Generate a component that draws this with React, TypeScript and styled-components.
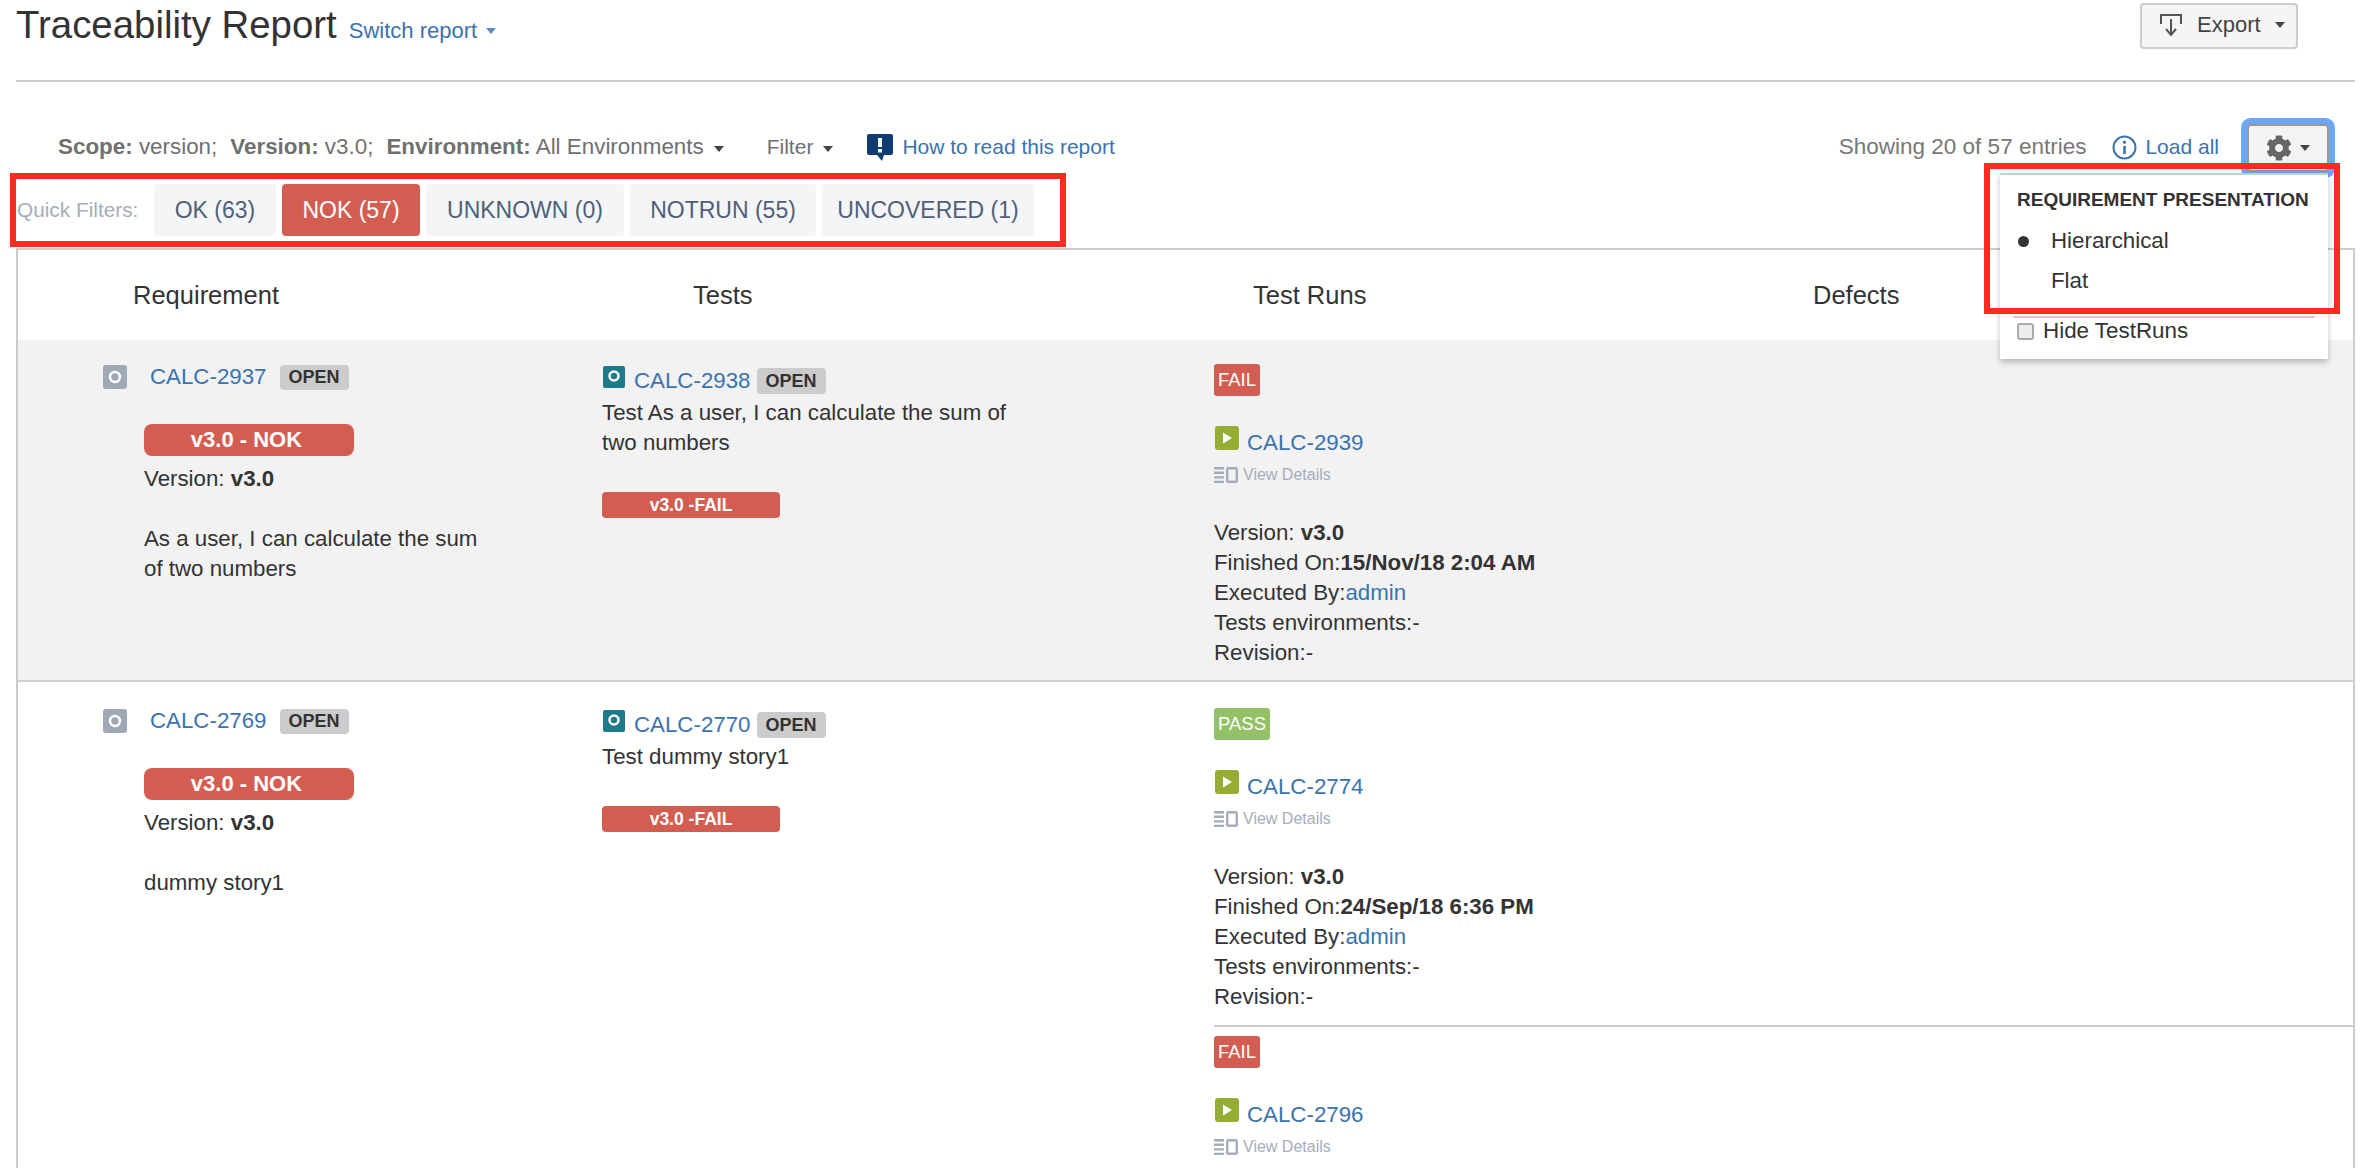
import { createGlobalStyle, styled } from "styled-components";
import { FaCog } from "react-icons/fa";

const GlobalStyle = createGlobalStyle`
  html, body {
    margin: 0;
    padding: 0;
    background: #fff;
  }
  body {
    font-family: "Liberation Sans", Arial, sans-serif;
    color: #333;
  }
`;

const Page = styled.div`
  position: relative;
  box-sizing: border-box;
  width: 2368px;
  height: 1168px;
  padding: 0 13px 0 16px;
  overflow: hidden;
`;

const Header = styled.header`
  display: flex;
  justify-content: space-between;
  align-items: flex-start;
  box-sizing: border-box;
  height: 82px;
  padding: 2px 57px 0 0;
  border-bottom: 2px solid #ccc;
`;

const TitleGroup = styled.div`
  display: flex;
  align-items: baseline;
  gap: 12px;
`;

const Title = styled.h1`
  margin: 0;
  font-size: 38.4px;
  line-height: 46px;
  font-weight: 400;
  color: #333;
`;

const Link = styled.a`
  color: #3b73af;
  text-decoration: none;
`;

const SwitchLink = styled(Link)`
  display: inline-flex;
  align-items: center;
  gap: 9px;
  font-size: 22px;
`;

const Caret = styled.span<{ $color?: string }>`
  display: inline-block;
  width: 0;
  height: 0;
  border-left: 5.5px solid transparent;
  border-right: 5.5px solid transparent;
  border-top: 6px solid ${(p) => p.$color ?? "#444"};
`;

const ExportButton = styled.button`
  display: flex;
  align-items: center;
  box-sizing: border-box;
  width: 158px;
  height: 46px;
  margin-top: 1px;
  padding: 0 0 3px 17px;
  gap: 14px;
  font: inherit;
  font-size: 22px;
  color: #444;
  background: #f5f5f5;
  border: 2px solid #ccc;
  border-radius: 4px;
`;

const Toolbar = styled.div`
  display: flex;
  justify-content: space-between;
  align-items: center;
  height: 34px;
  margin: 48px 26px 20px 0;
  padding-left: 42px;
  font-size: 21px;
  color: #707070;
`;

const ScopeGroup = styled.div`
  display: flex;
  align-items: center;
`;

const ScopeItem = styled.span`
  margin-right: 13px;
  font-size: 22.4px;
  white-space: pre;
`;

const ScopeFilter = styled(ScopeItem)`
  font-size: 21px;
`;

const ScopeCaret = styled.span`
  display: inline-flex;
  margin: 4px 43px 0 -3px;
`;

const HelpLink = styled(Link)`
  display: inline-flex;
  align-items: center;
  gap: 8px;
  margin-left: -10px;
`;

const ResultGroup = styled.div`
  display: flex;
  align-items: center;
`;

const Showing = styled.span`
  font-size: 22.5px;
  color: #777;
  margin-right: 26px;
`;

const LoadAll = styled(Link)`
  display: inline-flex;
  align-items: center;
  gap: 8px;
  margin-right: 28px;
`;

const GearWrap = styled.div`
  position: relative;
  margin-top: 2px;
`;

const GearButton = styled.button`
  display: flex;
  align-items: center;
  justify-content: center;
  gap: 8px;
  box-sizing: border-box;
  width: 82px;
  height: 48px;
  padding: 0;
  background: #f3f3f3;
  border: 2px solid #999;
  border-radius: 4px;
  box-shadow: 0 0 0 6px #6ea6f7;
  color: #666;
`;

const Menu = styled.div`
  position: absolute;
  top: 49px;
  right: 1px;
  z-index: 2;
  box-sizing: border-box;
  width: 328px;
  height: 186px;
  padding-top: 13px;
  background: #fff;
  border-top: 2px solid #ccc;
  box-shadow: 0 3px 6px rgba(0, 0, 0, 0.25);
  color: #333;
`;

const MenuTitle = styled.div`
  margin-left: 17px;
  font-size: 19px;
  line-height: 24px;
  font-weight: 700;
  white-space: nowrap;
`;

const MenuList = styled.div`
  margin-top: 9px;
`;

const MenuItem = styled.div`
  display: flex;
  align-items: center;
  height: 40px;
  padding-left: 18px;
  font-size: 22.3px;
`;

const Dot = styled.span<{ $on: boolean }>`
  width: 11px;
  height: 11px;
  margin-right: 22px;
  border-radius: 50%;
  background: #333;
  visibility: ${(p) => (p.$on ? "visible" : "hidden")};
`;

const MenuDivider = styled.hr`
  width: 302px;
  margin: 15px 0 0 13px;
  border: 0;
  border-top: 2px solid #ccc;
`;

const HideRow = styled.label`
  display: flex;
  align-items: center;
  gap: 9px;
  height: 26px;
  padding-left: 17px;
  font-size: 22.4px;
`;

const CheckBox = styled.input`
  appearance: none;
  flex: none;
  width: 17px;
  height: 17px;
  margin: 0;
  background: #eee;
  border: 2px solid #aaa;
  border-radius: 3px;
`;

const FilterRow = styled.div`
  display: flex;
  align-items: center;
  gap: 6px;
  height: 52px;
  margin-bottom: 12px;
`;

const FilterLabel = styled.span`
  width: 131px;
  margin-left: 1px;
  font-size: 20.8px;
  color: #a5adba;
  white-space: nowrap;
`;

const FilterButton = styled.button<{ $active?: boolean; $width: number }>`
  width: ${(p) => p.$width}px;
  height: 52px;
  padding: 0;
  font: inherit;
  font-size: 23px;
  color: ${(p) => (p.$active ? "#fff" : "#505f79")};
  background: ${(p) => (p.$active ? "#d45d52" : "#f4f5f7")};
  border: 0;
  border-radius: 4px;
  white-space: nowrap;
`;

const Table = styled.section`
  border: solid #ccc;
  border-width: 2px 2px 0;
`;

const HeadRow = styled.div`
  display: grid;
  grid-template-columns: 560px 560px 560px 1fr;
  align-items: center;
  height: 90px;
  padding-left: 115px;
  font-size: 25.5px;
`;

const Row = styled.div<{ $odd?: boolean }>`
  display: grid;
  grid-template-columns: 584px 612px 1fr;
  padding: ${(p) => (p.$odd ? "24px" : "26px")} 0 12px;
  background: ${(p) => (p.$odd ? "#f2f2f2" : "#fff")};
  border-bottom: 2px solid #d0d0d0;
`;

const ReqCell = styled.div`
  padding-left: 85px;
  font-size: 22.3px;
  line-height: 30px;
`;

const ReqHead = styled.div`
  display: flex;
  align-items: center;
  height: 26px;
`;

const IssueId = styled(Link)`
  font-size: 22.3px;
  line-height: 26px;
  white-space: nowrap;
`;

const ReqId = styled(IssueId)`
  margin-left: 23px;
`;

const Lozenge = styled.span<{ $tall?: boolean }>`
  display: inline-flex;
  align-items: center;
  justify-content: center;
  box-sizing: border-box;
  width: 69px;
  height: ${(p) => (p.$tall ? "26px" : "25px")};
  margin-left: ${(p) => (p.$tall ? "6px" : "13px")};
  font-size: 18px;
  font-weight: 700;
  line-height: 1;
  color: #333;
  background: #ccc;
  border-radius: 4px;
`;

const ReqBody = styled.div`
  margin-left: 41px;
`;

const StatusBar = styled.div<{ $small?: boolean }>`
  box-sizing: border-box;
  display: flex;
  align-items: center;
  justify-content: center;
  font-weight: 700;
  color: #fff;
  background: #d45d52;
  width: ${(p) => (p.$small ? "178px" : "210px")};
  height: ${(p) => (p.$small ? "26px" : "32px")};
  padding-right: ${(p) => (p.$small ? "0" : "5px")};
  font-size: ${(p) => (p.$small ? "17.5px" : "22px")};
  border-radius: ${(p) => (p.$small ? "4px" : "8px")};
`;

const ReqStatus = styled(StatusBar)`
  margin-top: 34px;
`;

const ReqVersion = styled.div`
  margin-top: 8px;
`;

const ReqText = styled.p`
  width: 345px;
  margin: 30px 0 0;
`;

const TestCell = styled.div`
  font-size: 22.3px;
  line-height: 30px;
`;

const TestHead = styled.div`
  display: flex;
  align-items: center;
  height: 28px;
  margin-top: 3px;
  padding-left: 1px;
`;

const TestIcon = styled.svg`
  align-self: flex-start;
  flex: none;
  margin: -1px 9px 0 0;
`;

const TestText = styled.p`
  width: 425px;
  margin: 3px 0 34px;
`;

const RunCell = styled.div`
  font-size: 22.3px;
  line-height: 30px;
`;

const Run = styled.div`
  & + & {
    margin-top: 13px;
    padding-top: 9px;
    border-top: 2px solid #ccc;
  }
`;

const RunBadge = styled.span<{ $pass?: boolean }>`
  display: inline-flex;
  align-items: center;
  justify-content: center;
  height: 32px;
  padding: 0 4px;
  font-size: 18.5px;
  color: #fff;
  background: ${(p) => (p.$pass ? "#94c167" : "#d45d52")};
  border-radius: 3px;
  vertical-align: top;
`;

const RunHead = styled.div`
  display: flex;
  align-items: center;
  height: 32px;
  margin-top: 31px;
  padding-left: 1px;
`;

const RunIcon = styled.svg`
  align-self: flex-start;
  flex: none;
  margin: -1px 8px 0 0;
`;

const ViewRow = styled.div`
  display: flex;
  align-items: center;
  gap: 5px;
  height: 20px;
  margin-top: 6px;
  font-size: 16px;
  line-height: 20px;
  color: #a5adba;
`;

const RunLines = styled.div`
  margin-top: 33px;
`;

const Annotation = styled.div`
  position: absolute;
  z-index: 3;
  box-sizing: border-box;
  border: 6px solid #ff2a1f;
  pointer-events: none;
`;

const FilterMark = styled(Annotation)`
  left: 10px;
  top: 173px;
  width: 1056px;
  height: 74px;
`;

const MenuMark = styled(Annotation)`
  left: 1984px;
  top: 163px;
  width: 356px;
  height: 151px;
`;

function ExportIcon() {
  return (
    <svg width="24" height="24" viewBox="0 0 24 24" fill="none" stroke="#555" strokeWidth="2">
      <path d="M2 11V2h20v9" />
      <path d="M12 6v16M7 16l5 6 5-6" />
    </svg>
  );
}

function HelpIcon() {
  return (
    <svg width="28" height="29" viewBox="0 0 28 29">
      <path d="M3 1h22a2 2 0 0 1 2 2v17a2 2 0 0 1-2 2h-7l-2 6-5-6H3a2 2 0 0 1-2-2V3a2 2 0 0 1 2-2z" fill="#0f3d73" />
      <rect x="12" y="5" width="4" height="9" fill="#fff" />
      <rect x="12" y="16" width="4" height="3.5" fill="#fff" />
    </svg>
  );
}

function InfoIcon() {
  return (
    <svg width="25" height="25" viewBox="0 0 25 25" fill="none" stroke="#3b73af" strokeWidth="2">
      <circle cx="12.5" cy="12.5" r="11" />
      <path d="M12.5 11v8" strokeWidth="2.6" />
      <circle cx="12.5" cy="7.2" r="1.6" fill="#3b73af" stroke="none" />
    </svg>
  );
}

function RequirementIcon() {
  return (
    <svg width="24" height="24" viewBox="0 0 24 24">
      <rect width="24" height="24" rx="3" fill="#9fa8b5" />
      <circle cx="12" cy="12" r="5" fill="none" stroke="#fff" strokeWidth="2.4" />
    </svg>
  );
}

function TestGlyph() {
  return (
    <TestIcon width="22" height="22" viewBox="0 0 22 22">
      <rect width="22" height="22" rx="2" fill="#1d7a8c" />
      <circle cx="11" cy="10" r="4.5" fill="none" stroke="#fff" strokeWidth="2.6" />
    </TestIcon>
  );
}

function RunGlyph() {
  return (
    <RunIcon width="24" height="24" viewBox="0 0 24 24">
      <rect width="24" height="24" rx="3" fill="#95ac35" />
      <path d="M8 6.5l9 5.5-9 5.5z" fill="#fff" />
    </RunIcon>
  );
}

function DetailsIcon() {
  return (
    <svg width="24" height="16" viewBox="0 0 24 16" fill="none" stroke="#a5adba" strokeWidth="2.4">
      <path d="M0 1.200h10M0 5.800h10M0 10.400h10M0 15h10" />
      <rect x="13.200" y="1.200" width="9.600" height="13.600" rx="1" />
    </svg>
  );
}

type RunData = {
  id: string;
  pass?: boolean;
  finished?: string;
};

type RowData = {
  reqId: string;
  reqText: string;
  testId: string;
  testText: string;
  runs: RunData[];
};

const rows: RowData[] = [
  {
    reqId: "CALC-2937",
    reqText: "As a user, I can calculate the sum of two numbers",
    testId: "CALC-2938",
    testText: "Test As a user, I can calculate the sum of two numbers",
    runs: [{ id: "CALC-2939", finished: "15/Nov/18 2:04 AM" }],
  },
  {
    reqId: "CALC-2769",
    reqText: "dummy story1",
    testId: "CALC-2770",
    testText: "Test dummy story1",
    runs: [
      { id: "CALC-2774", pass: true, finished: "24/Sep/18 6:36 PM" },
      { id: "CALC-2796" },
    ],
  },
];

const filters = [
  { label: "OK (63)", width: 122 },
  { label: "NOK (57)", width: 138, active: true },
  { label: "UNKNOWN (0)", width: 198 },
  { label: "NOTRUN (55)", width: 186 },
  { label: "UNCOVERED (1)", width: 212 },
];

export default function App() {
  return (
    <Page>
      <GlobalStyle />
      <Header>
        <TitleGroup>
          <Title>Traceability Report</Title>
          <SwitchLink href="#">
            Switch report <Caret $color="#5b8cc0" />
          </SwitchLink>
        </TitleGroup>
        <ExportButton>
          <ExportIcon />
          Export
          <Caret $color="#444" />
        </ExportButton>
      </Header>

      <Toolbar>
        <ScopeGroup>
          <ScopeItem>
            <b>Scope:</b> version;
          </ScopeItem>
          <ScopeItem>
            <b>Version:</b> v3.0;
          </ScopeItem>
          <ScopeItem>
            <b>Environment:</b> All Environments
          </ScopeItem>
          <ScopeCaret>
            <Caret />
          </ScopeCaret>
          <ScopeFilter>Filter</ScopeFilter>
          <ScopeCaret>
            <Caret />
          </ScopeCaret>
          <HelpLink href="#">
            <HelpIcon />
            How to read this report
          </HelpLink>
        </ScopeGroup>
        <ResultGroup>
          <Showing>Showing 20 of 57 entries</Showing>
          <LoadAll href="#">
            <InfoIcon />
            Load all
          </LoadAll>
          <GearWrap>
            <GearButton>
              <FaCog size={26} />
              <Caret />
            </GearButton>
            <Menu>
              <MenuTitle>REQUIREMENT PRESENTATION</MenuTitle>
              <MenuList>
                <MenuItem>
                  <Dot $on />
                  Hierarchical
                </MenuItem>
                <MenuItem>
                  <Dot $on={false} />
                  Flat
                </MenuItem>
              </MenuList>
              <MenuDivider />
              <HideRow>
                <CheckBox type="checkbox" />
                Hide TestRuns
              </HideRow>
            </Menu>
          </GearWrap>
        </ResultGroup>
      </Toolbar>

      <FilterRow>
        <FilterLabel>Quick Filters:</FilterLabel>
        {filters.map((f) => (
          <FilterButton key={f.label} $active={f.active} $width={f.width}>
            {f.label}
          </FilterButton>
        ))}
      </FilterRow>

      <Table>
        <HeadRow>
          <span>Requirement</span>
          <span>Tests</span>
          <span>Test Runs</span>
          <span>Defects</span>
        </HeadRow>
        {rows.map((row, i) => (
          <Row key={row.reqId} $odd={i === 0}>
            <ReqCell>
              <ReqHead>
                <RequirementIcon />
                <ReqId href="#">{row.reqId}</ReqId>
                <Lozenge>OPEN</Lozenge>
              </ReqHead>
              <ReqBody>
                <ReqStatus>v3.0 - NOK</ReqStatus>
                <ReqVersion>
                  Version: <b>v3.0</b>
                </ReqVersion>
                <ReqText>{row.reqText}</ReqText>
              </ReqBody>
            </ReqCell>
            <TestCell>
              <TestHead>
                <TestGlyph />
                <IssueId href="#">{row.testId}</IssueId>
                <Lozenge $tall>OPEN</Lozenge>
              </TestHead>
              <TestText>{row.testText}</TestText>
              <StatusBar $small>v3.0 -FAIL</StatusBar>
            </TestCell>
            <RunCell>
              {row.runs.map((run) => (
                <Run key={run.id}>
                  <RunBadge $pass={run.pass}>{run.pass ? "PASS" : "FAIL"}</RunBadge>
                  <RunHead>
                    <RunGlyph />
                    <IssueId href="#">{run.id}</IssueId>
                  </RunHead>
                  <ViewRow>
                    <DetailsIcon />
                    View Details
                  </ViewRow>
                  {run.finished ? (
                    <RunLines>
                      <div>
                        Version: <b>v3.0</b>
                      </div>
                      <div>
                        Finished On:<b>{run.finished}</b>
                      </div>
                      <div>
                        Executed By:<Link href="#">admin</Link>
                      </div>
                      <div>Tests environments:-</div>
                      <div>Revision:-</div>
                    </RunLines>
                  ) : null}
                </Run>
              ))}
            </RunCell>
          </Row>
        ))}
      </Table>

      <FilterMark />
      <MenuMark />
    </Page>
  );
}
